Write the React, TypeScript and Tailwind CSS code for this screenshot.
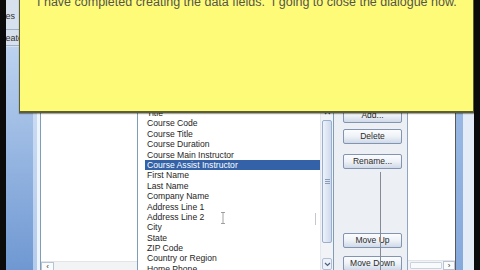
import React from "react";

const items = [
  "Title",
  "Course Code",
  "Course Title",
  "Course Duration",
  "Course Main Instructor",
  "Course Assist Instructor",
  "First Name",
  "Last Name",
  "Company Name",
  "Address Line 1",
  "Address Line 2",
  "City",
  "State",
  "ZIP Code",
  "Country or Region",
  "Home Phone",
];

function Btn({ label, className }: { label: string; className?: string }) {
  return (
    <div
      className={
        "w-[59px] h-[15px] shrink-0 rounded-[2px] border border-[#8394b0] bg-gradient-to-b from-[#fbfcfe] via-[#eef2f7] to-[#cfd9e8] flex items-center justify-center text-[8.5px] text-[#2a2a2a] " +
        (className ?? "")
      }
    >
      {label}
    </div>
  );
}

export default function App() {
  return (
    <div
      className="w-[480px] h-[270px] relative overflow-hidden bg-[#0b0b0b] flex"
      style={{ fontFamily: '"Liberation Sans", Arial, sans-serif' }}
    >
      <div className="w-[6px] shrink-0" />

      {/* left window frame */}
      <div className="w-[34px] shrink-0 flex flex-col">
        <div className="h-[47px] bg-[#d7e1ee] flex flex-col text-[9px] text-[#333]">
          <div className="h-[30px] pt-[4px] border-b border-[#9fb0c6] flex items-center">
            <div className="w-[9px] overflow-hidden flex justify-end whitespace-nowrap">Names</div>
          </div>
          <div className="h-[16px] pt-[3px] border-b border-[#9fb0c6] flex items-center">
            <div className="w-[17px] overflow-hidden flex justify-end whitespace-nowrap">Create</div>
          </div>
        </div>
        <div className="flex-1 flex">
          <div className="flex-1 bg-gradient-to-b from-[#bcd2ef] to-[#6f98d2]" />
          <div className="w-[4px] bg-gradient-to-b from-[#d3e2f5] to-[#b4cbec]" />
          <div className="w-[3px] bg-[#eef4fb]" />
        </div>
      </div>

      {/* left pane */}
      <div className="w-[97px] shrink-0 border-l border-[#7f9db9] bg-white flex flex-col">
        <div className="flex-1" />
        <div className="h-[9px] border-t border-[#e2e4e8] bg-[#f2f3f5] flex">
          <div className="w-[13px] h-[9px] border border-[#b8c4d4] bg-[#fafbfc] flex items-center justify-center text-[8px] leading-none text-[#333]">
            ‹
          </div>
        </div>
      </div>

      {/* field list */}
      <div className="w-[197px] shrink-0 border-l border-r border-[#7f9db9] bg-white flex relative">
        <div className="flex-1 pt-[108px] text-[8.6px] text-[#1e1e1e]">
          {items.map((it, i) => (
            <div
              key={it}
              className={
                "h-[10.4px] leading-[10.4px] ml-[7px] pl-[2px] whitespace-nowrap " +
                (i === 5 ? "bg-[#3362a8] text-white" : "")
              }
            >
              {it}
            </div>
          ))}
        </div>
        <div className="w-[13px] bg-[#f1f3f6] border-l border-[#e4e8ee] flex flex-col">
          <div className="h-[13px] mt-[106px] flex items-center justify-center">
            <svg width="7" height="5" viewBox="0 0 7 5">
              <path d="M1 4 L3.5 1.5 L6 4" fill="none" stroke="#4d6185" strokeWidth="1.2" />
            </svg>
          </div>
          <div className="h-[123px] mt-[1px] mx-[1px] rounded-[2px] border border-[#9aafcc] bg-gradient-to-r from-[#eef3fa] to-[#cdd9eb] flex flex-col items-center justify-center gap-[1px]">
            <div className="w-[5px] h-px bg-[#8a9cb8]" />
            <div className="w-[5px] h-px bg-[#8a9cb8]" />
            <div className="w-[5px] h-px bg-[#8a9cb8]" />
          </div>
          <div className="flex-1" />
          <div className="h-[12px] mx-[1px] rounded-[2px] border border-[#b0bfd4] bg-[#eef2f8] flex items-center justify-center">
            <svg width="7" height="5" viewBox="0 0 7 5">
              <path d="M1 1 L3.5 3.5 L6 1" fill="none" stroke="#4d6185" strokeWidth="1.2" />
            </svg>
          </div>
        </div>
        {/* text cursor and stray mark */}
        <svg className="absolute left-[82px] top-[212px]" width="6" height="12" viewBox="0 0 6 12">
          <path d="M1 0.5 H5 M3 0.5 V11.5 M1 11.5 H5" stroke="#8a8a8a" strokeWidth="0.8" fill="none" />
        </svg>
        <div className="absolute left-[177px] top-[213px] w-px h-[12px] bg-[#c4c8ce]" />
      </div>

      {/* buttons */}
      <div className="w-[73px] shrink-0 bg-[#eceff3] pl-[9px] flex flex-col">
        <Btn label="Add..." className="mt-[108px]" />
        <Btn label="Delete" className="mt-[6px]" />
        <Btn label="Rename..." className="mt-[10px]" />
        <Btn label="Move Up" className="mt-[64px]" />
        <Btn label="Move Down" className="mt-[8px]" />
      </div>

      {/* right pane */}
      <div className="w-[49px] shrink-0 border-l border-[#8fa5c2] border-r border-r-[#5a5a5a] bg-white flex flex-col">
        <div className="flex-1" />
        <div className="h-[10px] border-t border-[#e2e4e8] bg-[#f2f3f5] flex">
          <div className="w-[32px] ml-[2px] my-[1px] rounded-[1px] border border-[#c9d3e0] bg-[#f8fafc]" />
          <div className="flex-1" />
          <div className="w-[12px] border border-[#b8c4d4] bg-[#fafbfc] flex items-center justify-center text-[8px] leading-none text-[#333]">
            ›
          </div>
        </div>
      </div>

      {/* right frame */}
      <div className="w-[18px] shrink-0 flex">
        <div className="w-[7px] bg-gradient-to-b from-[#a6c2e8] to-[#86a9dc]" />
        <div className="w-[11px] bg-[#e3ecf7]" />
      </div>
      <div className="w-[6px] shrink-0" />

      {/* callout line */}
      <div className="absolute left-[380px] top-[172px] w-px h-[98px] bg-[#858b96]" />

      {/* yellow note */}
      <div className="absolute left-[19px] top-[-10px] w-[455px] h-[123px] bg-[#fefb78] border-l border-r border-b-2 border-[#5e5e34] shadow-[0_1px_1px_rgba(0,0,0,0.35)]">
        <div className="pl-[17px] pt-[6px] text-[12.5px] leading-[12.5px] text-[#55554a] whitespace-nowrap">
          I have completed creating the data fields.&nbsp; I going to close the dialogue now.
        </div>
      </div>
    </div>
  );
}
